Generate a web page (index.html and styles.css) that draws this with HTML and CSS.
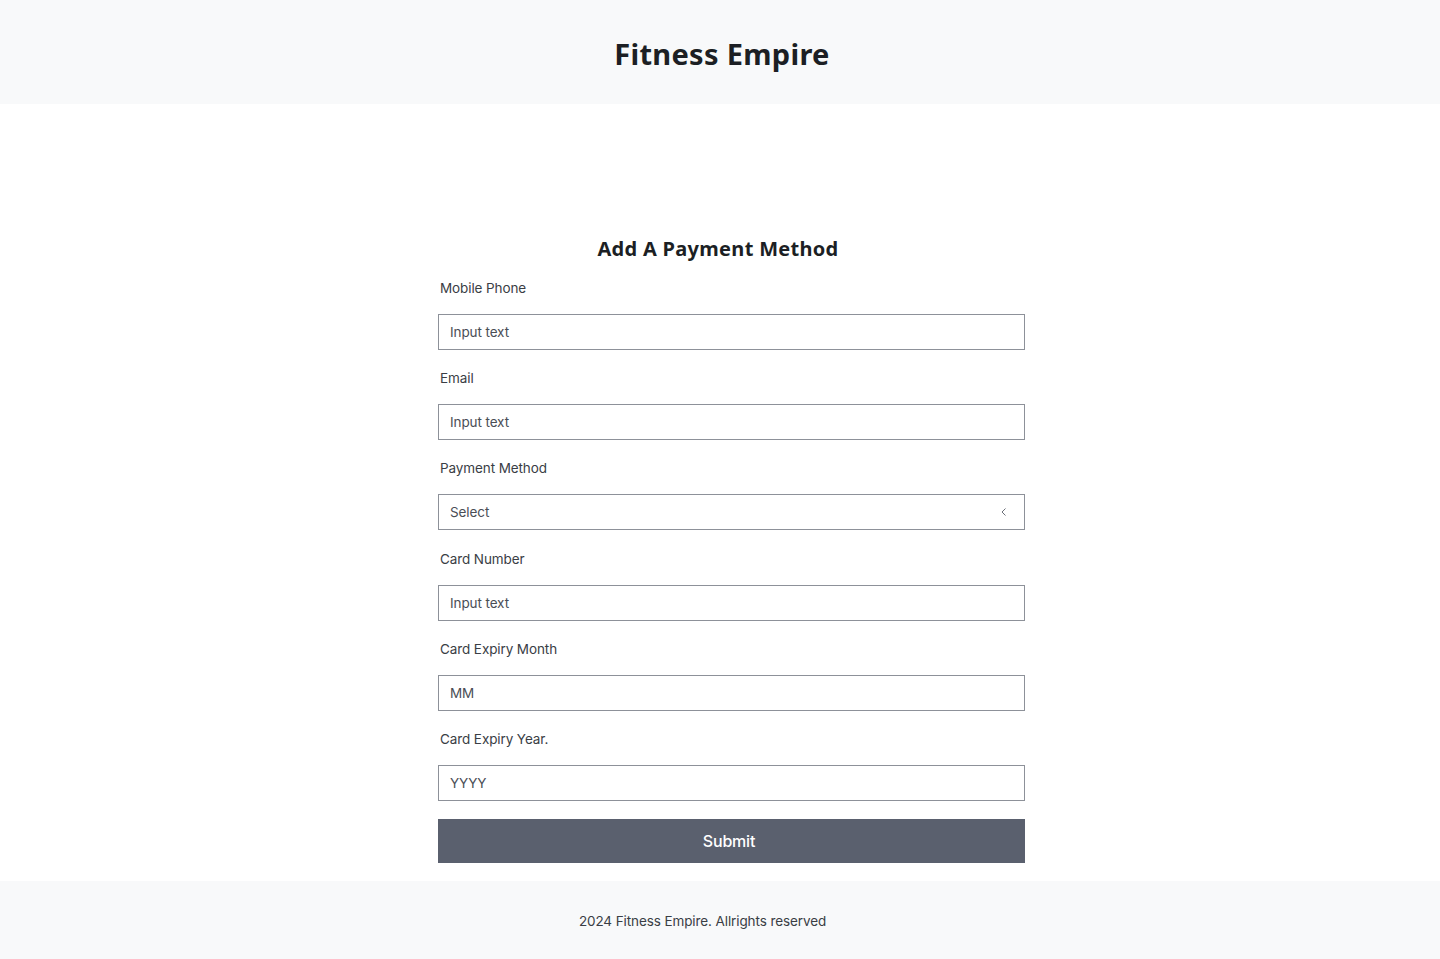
FILE: index.html
```html
<!DOCTYPE html>
<html lang="en">
<head>
<meta charset="utf-8">
<title>Fitness Empire</title>
<link rel="stylesheet" href="styles.css">
</head>
<body>
<header class="site-header">
  <h1 class="brand">Fitness Empire</h1>
</header>
<main class="main">
  <form class="pay-form">
    <h2 class="form-title">Add A Payment Method</h2>
    <div class="field">
      <label class="label">Mobile Phone</label>
      <div class="input"><span class="ph">Input text</span></div>
    </div>
    <div class="field">
      <label class="label">Email</label>
      <div class="input"><span class="ph">Input text</span></div>
    </div>
    <div class="field field-select">
      <label class="label">Payment Method</label>
      <div class="input select"><span class="ph">Select</span>
        <svg class="chev" width="8" height="12" viewBox="0 0 8 12"><path d="M5.5 2.5 L2 6 L5.5 9.5" fill="none" stroke="#6b6f78" stroke-width="1"/></svg>
      </div>
    </div>
    <div class="field">
      <label class="label">Card Number</label>
      <div class="input"><span class="ph">Input text</span></div>
    </div>
    <div class="field">
      <label class="label">Card Expiry Month</label>
      <div class="input"><span class="ph">MM</span></div>
    </div>
    <div class="field">
      <label class="label">Card Expiry Year.</label>
      <div class="input"><span class="ph">YYYY</span></div>
    </div>
    <button type="button" class="submit">Submit</button>
  </form>
</main>
<footer class="site-footer">
  <p class="copy">2024 Fitness Empire. Allrights reserved</p>
</footer>
</body>
</html>
```

FILE: styles.css
```css
* { box-sizing: border-box; }
html, body { margin: 0; padding: 0; }
body {
  font-family: Inter, "Noto Sans", sans-serif;
  color: #2b2f36;
  background: #fff;
}
.site-header {
  height: 104px;
  background: #f8f9fa;
  display: flex;
  align-items: center;
  justify-content: center;
  padding-left: 4px;
}
.brand {
  margin: 0;
  font-family: "Noto Sans", Inter, sans-serif;
  font-size: 29px;
  font-weight: 700;
  letter-spacing: 0.3px;
  color: #1c1f24;
  line-height: 1;
  padding-top: 2px;
}
.main {
  padding: 131px 0 18px 23px;
}
.pay-form {
  width: 587px;
  margin: 0 auto;
  display: flex;
  flex-direction: column;
}
.form-title {
  margin: 0 0 15px;
  padding-right: 27px;
  text-align: center;
  font-family: "Noto Sans", Inter, sans-serif;
  font-size: 20px;
  font-weight: 700;
  letter-spacing: 0.3px;
  line-height: 28px;
  color: #1c1f24;
}
.field {
  display: flex;
  flex-direction: column;
  margin-bottom: 18px;
}
.field-select { margin-bottom: 19px; }
.label {
  display: block;
  padding-left: 2px;
  font-size: 13.5px;
  letter-spacing: -0.1px;
  line-height: 20px;
  color: #3a3e45;
  margin-bottom: 16px;
}
.input {
  height: 36px;
  border: 1px solid #8d9199;
  display: flex;
  align-items: center;
  padding: 0 11px;
  background: #fff;
}
.ph {
  font-size: 13.5px;
  letter-spacing: -0.1px;
  color: #4a4e56;
}
.select {
  justify-content: space-between;
  padding-right: 16px;
}
.chev { display: block; }
.submit {
  height: 44px;
  border: none;
  background: #5a606e;
  color: #fff;
  font-family: Inter, "Noto Sans", sans-serif;
  font-size: 16px;
  font-weight: 500;
  letter-spacing: -0.2px;
  padding: 0 5px 0 0;
  cursor: pointer;
}
.site-footer {
  height: 78px;
  background: #f8f9fa;
  display: flex;
  align-items: center;
  justify-content: center;
  padding-right: 35px;
  padding-top: 2px;
}
.copy {
  margin: 0;
  font-size: 13.5px;
  letter-spacing: -0.1px;
  color: #3a3e45;
}
```
